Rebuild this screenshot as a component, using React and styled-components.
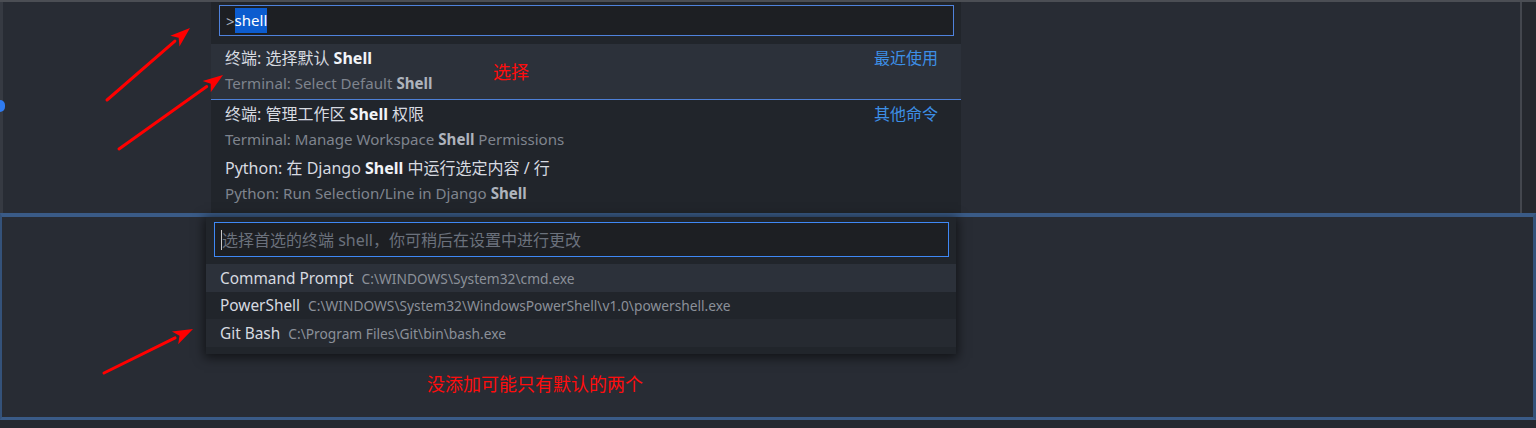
import React from 'react';
import styled, { createGlobalStyle } from 'styled-components';

const GlobalStyle = createGlobalStyle`
  html, body {
    margin: 0;
    padding: 0;
    background: #282c34;
  }
  body {
    font-family: "Noto Sans", "Noto Sans CJK SC", sans-serif;
    overflow: hidden;
  }
`;

const Page = styled.div`
  position: relative;
  width: 1536px;
  height: 428px;
  display: flex;
  flex-direction: column;
  overflow: hidden;
`;

const TopPanel = styled.div`
  position: relative;
  height: 211px;
  flex: none;
  display: flex;
  background: #282c34;
  border-top: 2px solid #4b4e54;
  overflow: hidden;
`;

const EditorArea = styled.div`
  flex: 1;
  display: flex;
  align-items: flex-start;
  border-left: 3px solid #363a42;
  padding-left: ${p => p.$offset}px;
`;

const Gutter = styled.div`
  width: 14px;
  flex: none;
  background: #25282e;
  border-left: 2px solid #44474e;
`;

const Dot = styled.span`
  position: absolute;
  left: 0;
  top: 98px;
  width: 5px;
  height: 12px;
  border-radius: 0 6px 6px 0;
  background: #2f7bf0;
`;

const QuickPick = styled.div`
  width: 750px;
  flex: none;
  background: #21252b;
  padding: ${p => p.$padTop}px 0 7px;
  box-shadow: ${p => (p.$shadow ? '0 2px 10px 2px rgba(0, 0, 0, 0.55)' : 'none')};
`;

const InputBox = styled.div`
  margin: 0 7px 0 8px;
  height: ${p => p.$height}px;
  box-sizing: border-box;
  display: flex;
  align-items: center;
  padding-left: 6px;
  background: #1d1f23;
  border: 1px solid ${p => p.$border};
  font-size: 15px;
  color: #abb2bf;
`;

const Selected = styled.span`
  background: #0c5ccf;
  color: #ffffff;
  padding: 2px 0 3px;
`;

const Placeholder = styled.span`
  font-size: 16px;
  color: #6b717c;
  border-left: 1px solid #c8c8c8;
  line-height: 20px;
`;

const List = styled.div`
  margin-top: ${p => p.$gap}px;
  display: flex;
  flex-direction: column;
`;

const CommandRow = styled.div`
  box-sizing: border-box;
  display: flex;
  justify-content: space-between;
  padding: 2px 23px 0 14px;
  background: ${p => (p.$active ? '#2c313a' : 'transparent')};
  border-bottom: 1px solid ${p => (p.$separator ? '#4d7fd6' : 'transparent')};
  height: ${p => (p.$separator ? 56 : 54)}px;
`;

const Lines = styled.div`
  display: flex;
  flex-direction: column;
`;

const Title = styled.div`
  font-size: 16px;
  line-height: 25px;
  color: #d7dae0;
  white-space: nowrap;

  b {
    color: #f2f4f8;
    font-weight: 700;
  }
`;

const Detail = styled.div`
  font-size: 15.1px;
  line-height: 25px;
  color: #7f848e;
  white-space: nowrap;

  b {
    color: #aeb3bc;
    font-weight: 700;
  }
`;

const GroupLabel = styled.div`
  font-size: 16px;
  line-height: 25px;
  color: #3d8fe6;
`;

const BottomPanel = styled.div`
  position: relative;
  height: 200px;
  flex: none;
  display: flex;
  align-items: flex-start;
  background: #282c34;
  border-top: 4px solid #3a5b87;
  border-left: 2px solid #34527a;
  border-right: 3px solid #34527a;
  border-bottom: 3px solid #3a5b87;
  padding-left: 204px;
`;

const BottomStrip = styled.div`
  flex: 1;
  background: #252830;
`;

const ShellRow = styled.div`
  height: ${p => p.$h}px;
  display: flex;
  align-items: center;
  gap: 8px;
  padding-left: 14px;
  background: ${p => p.$bg};
  white-space: nowrap;
`;

const ShellName = styled.span`
  font-size: 15.4px;
  color: #d7dae0;
`;

const ShellPath = styled.span`
  font-size: 13.75px;
  color: #8b9099;
`;

const Note = styled.div`
  position: absolute;
  left: ${p => p.$x}px;
  top: ${p => p.$y}px;
  font-size: 18px;
  line-height: 22px;
  color: #ff0d0d;
  white-space: nowrap;
`;

const Overlay = styled.svg`
  position: absolute;
  left: 0;
  top: 0;
  pointer-events: none;
`;

const arrows = [
  [107, 100, 190, 28],
  [119, 149, 223, 75],
  [104, 373, 193, 329],
];

function Arrow({ x1, y1, x2, y2 }) {
  const a = Math.atan2(y2 - y1, x2 - x1);
  const len = 20;
  const w = 7;
  const bx = x2 - len * Math.cos(a);
  const by = y2 - len * Math.sin(a);
  const px = -Math.sin(a) * w;
  const py = Math.cos(a) * w;
  return (
    <g>
      <line x1={x1} y1={y1} x2={bx} y2={by} stroke="#f00" strokeWidth="3" strokeLinecap="round" />
      <polygon points={`${x2},${y2} ${bx + px},${by + py} ${bx + len * 0.25 * Math.cos(a)},${by + len * 0.25 * Math.sin(a)} ${bx - px},${by - py}`} fill="#f00" />
    </g>
  );
}

const commands = [
  { title: <>终端: 选择默认 <b>Shell</b></>, detail: <>Terminal: Select Default <b>Shell</b></>, label: '最近使用', active: true, separator: true },
  { title: <>终端: 管理工作区 <b>Shell</b> 权限</>, detail: <>Terminal: Manage Workspace <b>Shell</b> Permissions</>, label: '其他命令' },
  { title: <>Python: 在 Django <b>Shell</b> 中运行选定内容 / 行</>, detail: <>Python: Run Selection/Line in Django <b>Shell</b></> },
];

const shells = [
  { name: 'Command Prompt', path: 'C:\\WINDOWS\\System32\\cmd.exe', bg: '#2c313a', h: 28 },
  { name: 'PowerShell', path: 'C:\\WINDOWS\\System32\\WindowsPowerShell\\v1.0\\powershell.exe', bg: '#21252b', h: 27 },
  { name: 'Git Bash', path: 'C:\\Program Files\\Git\\bin\\bash.exe', bg: '#262a31', h: 28 },
];

export default function App() {
  return (
    <Page>
      <GlobalStyle />
      <TopPanel>
        <Dot />
        <EditorArea $offset={208}>
          <QuickPick $padTop={3}>
            <InputBox $height={31} $border="#4f82dc">
              &gt;<Selected>shell</Selected>
            </InputBox>
            <List $gap={8}>
              {commands.map((c, i) => (
                <CommandRow key={i} $active={c.active} $separator={c.separator}>
                  <Lines>
                    <Title>{c.title}</Title>
                    <Detail>{c.detail}</Detail>
                  </Lines>
                  {c.label && <GroupLabel>{c.label}</GroupLabel>}
                </CommandRow>
              ))}
            </List>
          </QuickPick>
        </EditorArea>
        <Gutter />
        <Note $x={493} $y={59}>选择</Note>
      </TopPanel>
      <BottomPanel>
        <QuickPick $padTop={5} $shadow>
          <InputBox $height={35} $border="#3f88f5">
            <Placeholder>选择首选的终端 shell，你可稍后在设置中进行更改</Placeholder>
          </InputBox>
          <List $gap={7}>
            {shells.map(s => (
              <ShellRow key={s.name} $bg={s.bg} $h={s.h}>
                <ShellName>{s.name}</ShellName>
                <ShellPath>{s.path}</ShellPath>
              </ShellRow>
            ))}
          </List>
        </QuickPick>
        <Note $x={425} $y={156}>没添加可能只有默认的两个</Note>
      </BottomPanel>
      <BottomStrip />
      <Overlay width="1536" height="428">
        {arrows.map(([x1, y1, x2, y2], i) => (
          <Arrow key={i} x1={x1} y1={y1} x2={x2} y2={y2} />
        ))}
      </Overlay>
    </Page>
  );
}
